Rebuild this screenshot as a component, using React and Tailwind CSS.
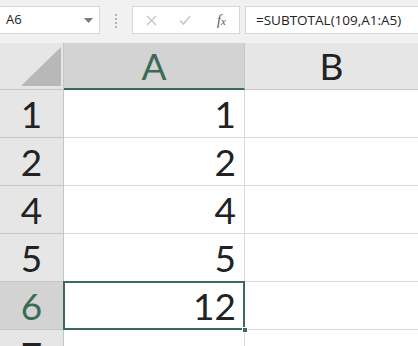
const rows = [
  { n: "1", v: "1" },
  { n: "2", v: "2" },
  { n: "4", v: "4" },
  { n: "5", v: "5" },
  { n: "6", v: "12", active: true },
];

const big = { fontFamily: "Lato, 'Open Sans', sans-serif" };

function Toolbar() {
  return (
    <div className="flex h-[43px] items-start bg-[#f1f1f1] pt-[6px]">
      <div className="flex h-[28px] w-[100px] items-center justify-between border border-l-0 border-[#d6d6d6] bg-white pl-[6px] pr-[6px]">
        <span className="text-[13px] text-[#222]" style={{ fontFamily: "'Open Sans', sans-serif" }}>
          A6
        </span>
        <svg width="9" height="5" viewBox="0 0 9 5">
          <path d="M0 0h9L4.5 5z" fill="#7a7a7a" />
        </svg>
      </div>
      <div className="flex w-[32px] flex-col items-center gap-[2px] pt-[8px]">
        {[0, 1, 2, 3].map((i) => (
          <div key={i} className="h-[2px] w-[2px] bg-[#b4b4b4]" />
        ))}
      </div>
      <div className="flex h-[28px] w-[108px] items-center border border-[#d6d6d6] bg-white">
        <svg className="ml-[13px]" width="11" height="11" viewBox="0 0 11 11">
          <path d="M1 1l9 9M10 1l-9 9" stroke="#c4c4c4" strokeWidth="1.3" />
        </svg>
        <svg className="ml-[22px]" width="12" height="10" viewBox="0 0 12 10">
          <path d="M1 5.5l3.5 3.5L11 1" stroke="#c4c4c4" strokeWidth="1.5" fill="none" />
        </svg>
        <span
          className="ml-[26px] text-[14px] italic text-[#555]"
          style={{ fontFamily: "'Liberation Serif', serif" }}
        >
          f<span className="text-[11px]">x</span>
        </span>
      </div>
      <div className="ml-[5px] flex h-[28px] flex-1 items-center border border-r-0 border-[#d6d6d6] bg-white pl-[10px]">
        <span className="text-[13.5px] text-[#222]" style={{ fontFamily: "'Open Sans', sans-serif" }}>
          =SUBTOTAL(109,A1:A5)
        </span>
      </div>
    </div>
  );
}

export default function App() {
  return (
    <div className="h-[346px] w-[418px] overflow-hidden bg-white">
      <Toolbar />
      <div className="grid grid-cols-[64px_181px_1fr]" style={big}>
        <div className="flex h-[47px] items-end justify-end border-r border-b border-[#c6c6c6] bg-[#e6e6e6] pb-[3px] pr-[2px]">
          <svg width="40" height="39" viewBox="0 0 40 39">
            <path d="M40 0V39H0z" fill="#b8b8b8" />
          </svg>
        </div>
        <div className="flex h-[47px] items-center justify-center border-r border-b-2 border-r-[#c6c6c6] border-b-[#3c6b55] bg-[#d3d3d3] text-[37px] text-[#3c6b55]">
          A
        </div>
        <div className="flex h-[47px] items-center justify-center border-b border-[#c6c6c6] bg-[#e6e6e6] text-[37px] text-[#222]">
          B
        </div>

        {rows.map((r) => (
          <div key={r.n} className="contents">
            <div
              className={
                r.active
                  ? "flex h-[48px] items-center justify-center border-r border-b border-[#c6c6c6] bg-[#d3d3d3] text-[37px] text-[#3c6b55]"
                  : "flex h-[48px] items-center justify-center border-r border-b border-[#c6c6c6] bg-[#e6e6e6] text-[37px] text-[#222]"
              }
            >
              {r.n}
            </div>
            <div className="relative flex h-[48px] items-center justify-end border-r border-b border-[#d9d9d9] pr-[8px] text-[37px] text-[#222]">
              {r.v}
              {r.active && (
                <>
                  <div className="absolute -top-px -left-px -right-px -bottom-px border-2 border-[#3c6b55]" />
                  <div className="absolute -right-[4px] -bottom-[4px] h-[6px] w-[6px] border border-white bg-[#3c6b55]" />
                </>
              )}
            </div>
            <div className="h-[48px] border-b border-[#d9d9d9]" />
          </div>
        ))}

        <div className="flex h-[48px] items-start justify-center border-r border-[#c6c6c6] bg-[#e6e6e6] pt-[6px] text-[37px] leading-none text-[#222]">
          7
        </div>
        <div className="h-[48px] border-r border-[#d9d9d9]" />
        <div className="h-[48px]" />
      </div>
    </div>
  );
}
